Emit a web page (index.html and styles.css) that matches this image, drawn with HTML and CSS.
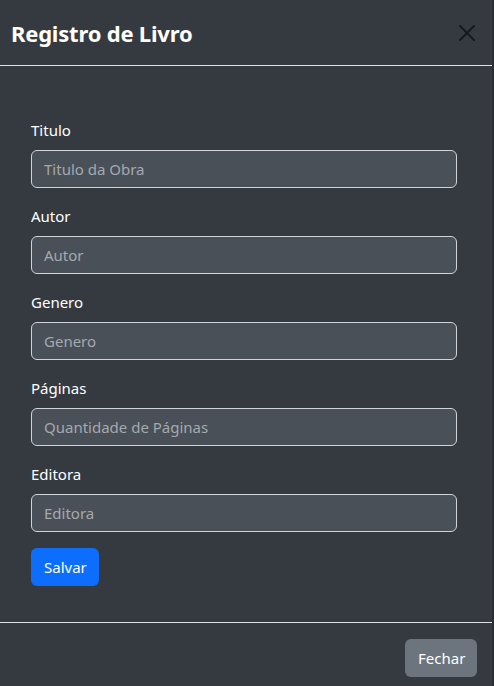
FILE: index.html
```html
<!DOCTYPE html>
<html lang="pt-BR">
<head>
<meta charset="utf-8">
<title>Registro de Livro</title>
<link rel="stylesheet" href="styles.css">
</head>
<body>
<div class="modal">
  <header class="modal-header">
    <h5 class="modal-title">Registro de Livro</h5>
    <button class="btn-close" type="button" aria-label="Close">
      <svg viewBox="0 0 16 16" width="16" height="16"><path d="M.293.293a1 1 0 0 1 1.414 0L8 6.586 14.293.293a1 1 0 1 1 1.414 1.414L9.414 8l6.293 6.293a1 1 0 0 1-1.414 1.414L8 9.414l-6.293 6.293a1 1 0 0 1-1.414-1.414L6.586 8 .293 1.707a1 1 0 0 1 0-1.414z"/></svg>
    </button>
  </header>
  <main class="modal-body">
    <form class="form">
      <div class="field">
        <label class="label">Titulo</label>
        <input class="input" type="text" placeholder="Titulo da Obra">
      </div>
      <div class="field">
        <label class="label">Autor</label>
        <input class="input" type="text" placeholder="Autor">
      </div>
      <div class="field">
        <label class="label">Genero</label>
        <input class="input" type="text" placeholder="Genero">
      </div>
      <div class="field">
        <label class="label">Páginas</label>
        <input class="input" type="text" placeholder="Quantidade de Páginas">
      </div>
      <div class="field">
        <label class="label">Editora</label>
        <input class="input" type="text" placeholder="Editora">
      </div>
      <div class="actions">
        <button class="btn btn-primary" type="button">Salvar</button>
      </div>
    </form>
  </main>
  <footer class="modal-footer">
    <button class="btn btn-secondary" type="button">Fechar</button>
  </footer>
</div>
</body>
</html>
```
FILE: styles.css
```css
* { box-sizing: border-box; }
html, body {
  margin: 0;
  padding: 0;
  background: #2b2f35;
  height: 100%;
  overflow: hidden;
}
body {
  font-family: "Noto Sans", "Open Sans", sans-serif;
  font-size: 16px;
  line-height: 24px;
  color: #fff;
}
.modal {
  width: 492px;
  height: 100%;
  background: #353a41;
  display: flex;
  flex-direction: column;
}
.modal-header {
  height: 66px;
  border-bottom: 1px solid #dee2e6;
  display: flex;
  align-items: center;
  justify-content: space-between;
  padding: 0 13px 0 11px;
  flex: none;
}
.modal-title {
  margin: 0;
  font-size: 22px;
  font-weight: 700;
  line-height: 30px;
  letter-spacing: -0.2px;
}
.btn-close {
  background: none;
  border: 0;
  padding: 4px;
  margin: 0;
  width: 24px;
  height: 24px;
  display: flex;
  align-items: center;
  justify-content: center;
  cursor: pointer;
}
.btn-close svg { fill: #16191d; display: block; }
.modal-body {
  padding: 52px 35px 36px 31px;
  border-bottom: 1px solid #dee2e6;
  flex: none;
}
.form { display: flex; flex-direction: column; }
.field {
  display: flex;
  flex-direction: column;
  margin-bottom: 16px;
}
.label {
  font-size: 15px;
  line-height: 24px;
  margin-bottom: 8px;
  font-weight: 400;
}
.input {
  height: 38px;
  width: 100%;
  border: 1px solid #ced4da;
  border-radius: 6px;
  background: #4a5058;
  color: #fff;
  padding: 6px 12px;
  font-family: inherit;
  font-size: 15px;
  outline: none;
}
.input::placeholder { color: #a4a9ae; }
.actions { display: flex; }
.btn {
  height: 38px;
  padding: 0 12px;
  border: 1px solid transparent;
  border-radius: 6px;
  color: #fff;
  font-family: inherit;
  font-size: 15px;
  line-height: 24px;
  cursor: pointer;
}
.btn-primary { background: #0d6efd; width: 68px; }
.btn-secondary { background: #6c757d; width: 72px; }
.modal-footer {
  display: flex;
  justify-content: flex-end;
  padding: 16px 15px;
}
```
